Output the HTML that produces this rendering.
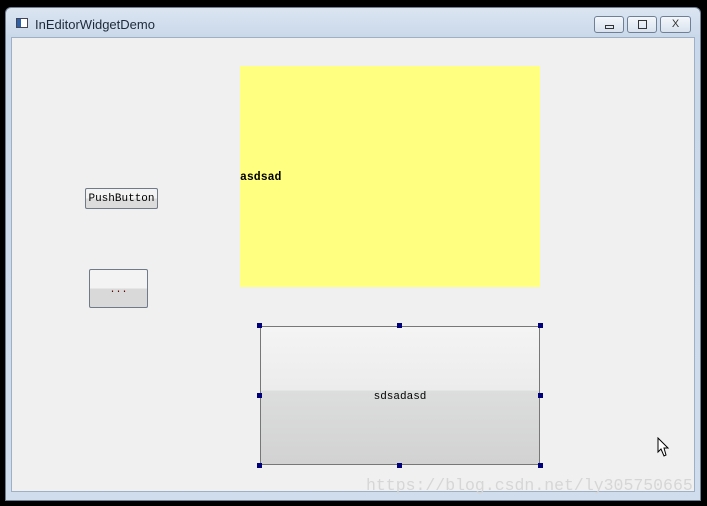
<!DOCTYPE html>
<html><head><style>
body{margin:0;width:707px;height:506px;background:#000;position:relative;overflow:hidden;font-family:"Liberation Mono","Noto Sans CJK SC",monospace;}
.win{position:absolute;left:5px;top:7px;width:696px;height:494px;background:linear-gradient(#dbe5f1,#c9d8ea 30px,#d0ddec);border-radius:6px 6px 0 0;border:1px solid #6e7f93;box-sizing:border-box;}
.client{position:absolute;left:11px;top:37px;width:684px;height:455px;background:#f0f0f0;border:1px solid #9fb0c4;box-sizing:border-box;}
.title{position:absolute;left:35px;top:17px;font:13px "Liberation Sans",sans-serif;color:#1e2a3a;}
.tb{position:absolute;top:16px;height:17px;border:1px solid #6f7f95;border-radius:3px;background:linear-gradient(#f4f7fb,#d8e2ee);box-sizing:border-box;}
.abs{position:absolute;}
.h{position:absolute;width:5px;height:5px;background:#00007a;}
</style></head><body>
<div class="win"></div>
<div class="abs" style="left:16px;top:18px;width:12px;height:10px;border:1px solid #445;background:#fff;box-sizing:border-box"><div style="width:4px;height:8px;background:#2b5fa8"></div></div>
<div class="title">InEditorWidgetDemo</div>
<div class="tb" style="left:594px;width:30px"><div class="abs" style="left:10px;top:8px;width:9px;height:4px;border:1px solid #333;box-sizing:border-box"></div></div>
<div class="tb" style="left:627px;width:30px"><div class="abs" style="left:10px;top:3px;width:9px;height:9px;border:1px solid #333;box-sizing:border-box"></div></div>
<div class="tb" style="left:660px;width:31px;font:11px 'Liberation Sans';text-align:center;line-height:15px;color:#333">X</div>
<div class="client"></div>
<div class="abs" style="left:240px;top:66px;width:300px;height:221px;background:#ffff80"></div>
<div class="abs" style="left:240px;top:171px;font-size:11.5px;color:#000;font-weight:bold">asdsad</div>
<div class="abs" style="left:85px;top:188px;width:73px;height:21px;border:1px solid #707a88;border-radius:2px;background:linear-gradient(#f3f3f3 50%,#dcdcdc 50%);box-sizing:border-box;font-size:11px;text-align:center;line-height:21px">PushButton</div>
<div class="abs" style="left:89px;top:269px;width:59px;height:39px;border:1px solid #707a88;border-radius:2px;background:linear-gradient(#f3f3f3 50%,#d9d9d9 50%);box-sizing:border-box;font-size:10px;text-align:center;line-height:42px;color:#600">...</div>
<div class="abs" style="left:260px;top:326px;width:280px;height:139px;border:1px solid #777;background:linear-gradient(#f4f4f4,#ececec 63px,#dcdddd 64px,#d2d2d2);box-sizing:border-box"></div>
<div class="abs" style="left:260px;top:391px;width:280px;text-align:center;font-size:11px">sdsadasd</div>
<div class="h" style="left:257px;top:323px"></div><div class="h" style="left:397px;top:323px"></div><div class="h" style="left:538px;top:323px"></div>
<div class="h" style="left:257px;top:393px"></div><div class="h" style="left:538px;top:393px"></div>
<div class="h" style="left:257px;top:463px"></div><div class="h" style="left:397px;top:463px"></div><div class="h" style="left:538px;top:463px"></div>
<svg class="abs" style="left:657px;top:437px" width="14" height="21"><path d="M1 1 L1 15 L4 12 L7 19 L9 18 L7 11 L11 11 Z" fill="#fff" stroke="#000" stroke-width="1"/></svg>
<div class="abs" style="left:366px;top:476px;font:16.5px 'Liberation Mono',monospace;color:#d6d6d6">https://blog.csdn.net/ly305750665</div>
</body></html>
